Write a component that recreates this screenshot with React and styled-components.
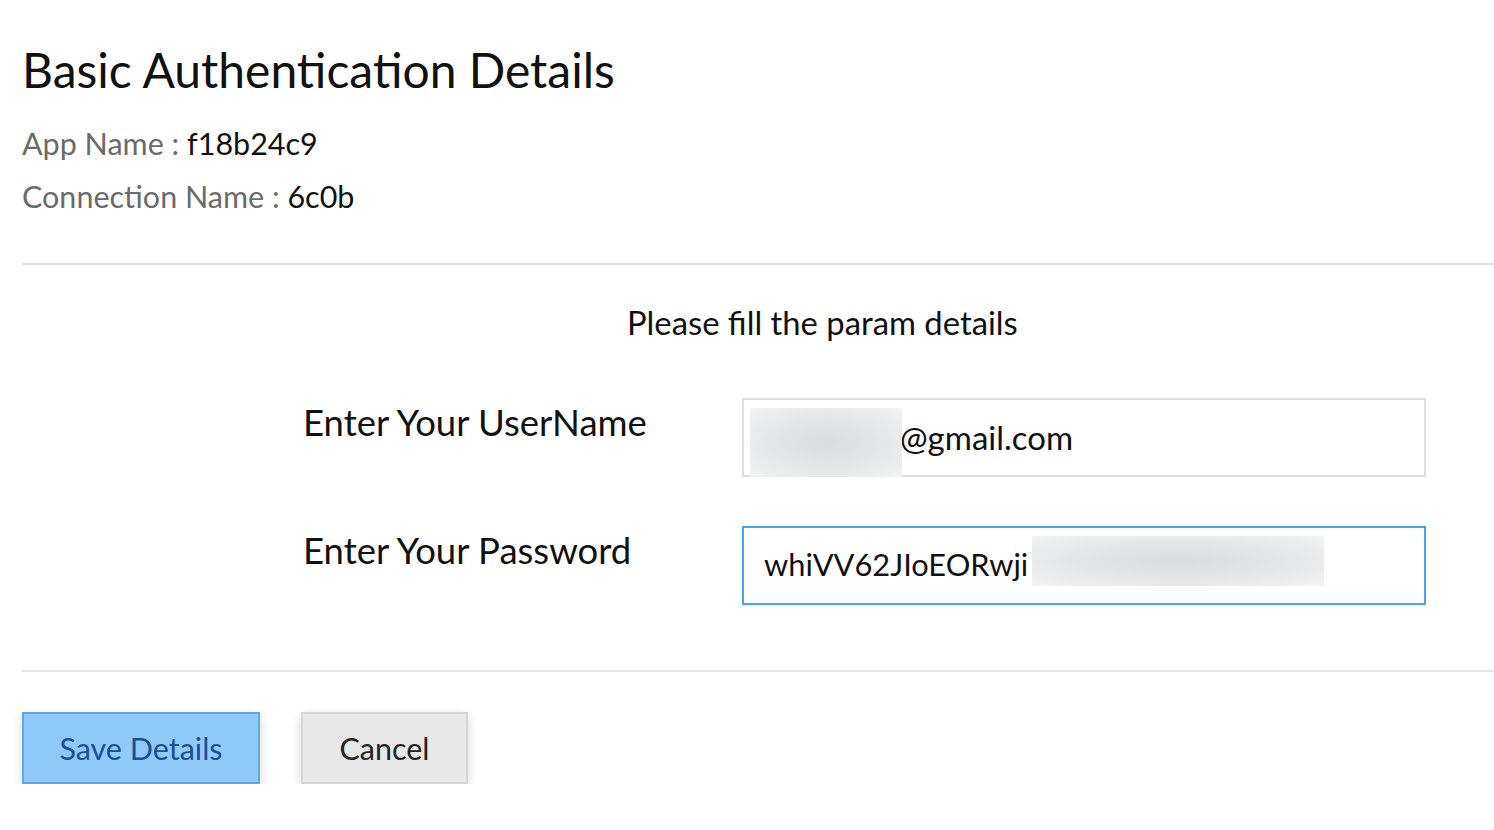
import styled, { createGlobalStyle } from 'styled-components';

const GlobalStyle = createGlobalStyle`
  body {
    margin: 0;
    background: #fff;
    font-family: Lato, "Noto Sans", sans-serif;
    color: #111;
  }
`;

const Page = styled.div`
  padding: 40px 0 0 22px;
  width: 1472px;
`;

const Title = styled.h1`
  margin: 0 0 17px;
  font-size: 48px;
  font-weight: 400;
  line-height: 60px;
  color: #111;
`;

const InfoLine = styled.div`
  font-size: 30.5px;
  line-height: 53px;
  color: #6b6b6b;

  span {
    color: #111;
  }
`;

const Divider = styled.hr`
  margin: ${(p) => p.$top}px 0 0;
  border: none;
  border-top: 2px solid #e3e3e3;
`;

const Prompt = styled.div`
  margin: 36px 0 0;
  padding-left: 605px;
  font-size: 32.8px;
  line-height: 44px;
  color: #111;
`;

const Form = styled.div`
  display: grid;
  grid-template-columns: 439px 684px;
  row-gap: 49px;
  margin: 53px 0 65px 281px;
`;

const Label = styled.div`
  font-size: 36.5px;
  line-height: 48px;
  color: #111;
`;

const Field = styled.div`
  position: relative;
  height: 79px;
  box-sizing: border-box;
  border: 2px solid ${(p) => (p.$focused ? '#42a5f5' : '#e0e0e0')};
  display: flex;
  align-items: center;
  padding: 0 0 2px ${(p) => p.$pad}px;
  font-size: ${(p) => p.$size}px;
  color: #111;
`;

const Blur = styled.div`
  position: absolute;
  left: ${(p) => p.$x}px;
  top: ${(p) => p.$y}px;
  width: ${(p) => p.$w}px;
  height: ${(p) => p.$h}px;
  background: radial-gradient(ellipse at 50% 50%, #d9dbdc 0%, #e4e6e7 55%, #f3f4f4 100%);
`;

const Actions = styled.div`
  display: flex;
  gap: 41px;
  padding-top: 40px;
`;

const Button = styled.button`
  width: ${(p) => p.$w}px;
  height: 72px;
  padding: 0;
  font-family: inherit;
  font-size: 30.5px;
  border: 2px solid ${(p) => (p.$primary ? '#62a7e3' : '#d6d6d6')};
  background: ${(p) => (p.$primary ? '#90caf9' : '#e8e8e8')};
  color: ${(p) => (p.$primary ? '#1d4f94' : '#222')};
  box-shadow: 0 4px 10px rgba(0, 0, 0, 0.16);
  cursor: pointer;
`;

export default function App() {
  return (
    <>
      <GlobalStyle />
      <Page>
        <Title>Basic Authentication Details</Title>
        <InfoLine>
          App Name : <span>f18b24c9</span>
        </InfoLine>
        <InfoLine>
          Connection Name : <span>6c0b</span>
        </InfoLine>
        <Divider $top={40} />
        <Prompt>Please fill the param details</Prompt>
        <Form>
          <Label>Enter Your UserName</Label>
          <Field $pad={156} $size={33}>
            <Blur $x={6} $y={8} $w={152} $h={69} />
            @gmail.com
          </Field>
          <Label>Enter Your Password</Label>
          <Field $focused $pad={20} $size={30.8}>
            whiVV62JIoEORwji
            <Blur $x={288} $y={8} $w={292} $h={50} />
          </Field>
        </Form>
        <Divider $top={0} />
        <Actions>
          <Button $primary $w={238}>Save Details</Button>
          <Button $w={167}>Cancel</Button>
        </Actions>
      </Page>
    </>
  );
}
